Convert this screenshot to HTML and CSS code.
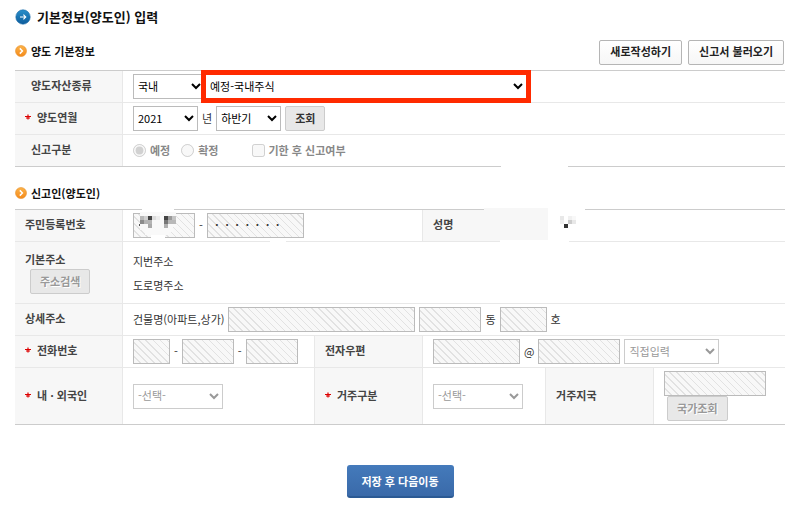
FILE: index.html
```
<!DOCTYPE html>
<html lang="ko">
<head>
    <meta charset="UTF-8">
    <meta name="viewport" content="width=device-width, initial-scale=1.0">
    <title>기본정보(양도인) 입력</title>
    <link rel="stylesheet" href="styles.css">
</head>
<body>
    <!-- shared icons -->
    <svg class="defs" aria-hidden="true">
        <defs>
            <linearGradient id="blue" x1="0" y1="0" x2="0" y2="1">
                <stop offset="0" stop-color="#2a8fca"/>
                <stop offset="1" stop-color="#0d5c9c"/>
            </linearGradient>
            <linearGradient id="orange" x1="0" y1="0" x2="0" y2="1">
                <stop offset="0" stop-color="#fbb34a"/>
                <stop offset="1" stop-color="#f58a1a"/>
            </linearGradient>
        </defs>
        <symbol id="chevron" viewBox="0 0 12 12">
            <circle cx="6" cy="6" r="5.5" fill="url(#orange)" stroke="#e8912d" stroke-width="0.6"/>
            <path d="M4.8 3.4L7.4 6L4.8 8.6" fill="none" stroke="#fff" stroke-width="1.5"/>
        </symbol>
        <symbol id="star" viewBox="0 0 6 6">
            <path d="M3 0.5V5.5M0 2.5H6M1 4H5" stroke="#d00" stroke-width="1.2" fill="none"/>
        </symbol>
    </svg>

    <h1>
        <svg class="icon-title" viewBox="0 0 16 16">
            <circle cx="8" cy="8" r="7.2" fill="url(#blue)" stroke="#1a6aa8" stroke-width="0.6"/>
            <path d="M5 8H10.8M8.4 5.6L10.8 8L8.4 10.4" fill="none" stroke="#fff" stroke-width="1.1"/>
        </svg>
        기본정보(양도인) 입력
    </h1>

    <section>
        <div class="section-head">
            <h2><svg class="icon-sub"><use href="#chevron"/></svg>양도 기본정보</h2>
            <div class="actions">
                <button type="button" class="btn-white">새로작성하기</button>
                <button type="button" class="btn-white">신고서 불러오기</button>
            </div>
        </div>
        <table class="basic">
            <colgroup><col class="col-first"><col></colgroup>
            <tbody>
                <tr>
                    <th scope="row">양도자산종류</th>
                    <td>
                        <div class="line flush">
                            <select class="w-area" aria-label="국내외 구분"><option>국내</option></select>
                            <div class="highlight">
                                <select aria-label="양도자산종류"><option>예정-국내주식</option></select>
                            </div>
                        </div>
                    </td>
                </tr>
                <tr>
                    <th scope="row" class="required"><svg class="star"><use href="#star"/></svg>양도연월</th>
                    <td>
                        <div class="line">
                            <select class="w-65" id="year"><option>2021</option></select>
                            <label for="year">년</label>
                            <select class="w-65" aria-label="반기"><option>하반기</option></select>
                            <button type="button" class="btn-gray">조회</button>
                        </div>
                    </td>
                </tr>
                <tr>
                    <th scope="row">신고구분</th>
                    <td>
                        <div class="line choices">
                            <input type="radio" name="kind" id="kind-pre" checked disabled><label for="kind-pre">예정</label>
                            <input type="radio" name="kind" id="kind-final" disabled><label for="kind-final">확정</label>
                            <input type="checkbox" id="late" disabled><label for="late">기한 후 신고여부</label>
                        </div>
                    </td>
                </tr>
            </tbody>
        </table>
        <span class="patch patch-basic"></span>
    </section>

    <section class="reporter">
        <div class="section-head">
            <h2><svg class="icon-sub"><use href="#chevron"/></svg>신고인(양도인)</h2>
        </div>
        <div class="table-wrap">
            <table>
                <colgroup>
                    <col class="col-first"><col class="col-phone"><col class="col-label">
                    <col class="col-kind"><col class="col-label"><col>
                </colgroup>
                <tbody>
                    <tr>
                        <th scope="row">주민등록번호</th>
                        <td colspan="2">
                            <div class="line">
                                <input type="text" class="w-62" aria-label="주민등록번호 앞자리" readonly>
                                <span>-</span>
                                <input type="text" class="w-97 secret" aria-label="주민등록번호 뒷자리" value="ㆍㆍㆍㆍㆍㆍㆍ" readonly>
                            </div>
                        </td>
                        <th scope="row">성명</th>
                        <td colspan="2"></td>
                    </tr>
                    <tr class="address">
                        <th scope="row">기본주소<br><button type="button" class="btn-gray" disabled>주소검색</button></th>
                        <td colspan="5">
                            <p>지번주소</p>
                            <p>도로명주소</p>
                        </td>
                    </tr>
                    <tr>
                        <th scope="row">상세주소</th>
                        <td colspan="5">
                            <div class="line">
                                <label for="building">건물명(아파트,상가)</label>
                                <input type="text" class="w-187" id="building" readonly>
                                <input type="text" class="w-62" id="dong" readonly>
                                <label for="dong">동</label>
                                <input type="text" class="w-47" id="ho" readonly>
                                <label for="ho">호</label>
                            </div>
                        </td>
                    </tr>
                    <tr>
                        <th scope="row" class="required"><svg class="star"><use href="#star"/></svg>전화번호</th>
                        <td>
                            <div class="line">
                                <input type="text" class="w-37" aria-label="전화번호 1" readonly>
                                <span>-</span>
                                <input type="text" class="w-52" aria-label="전화번호 2" readonly>
                                <span>-</span>
                                <input type="text" class="w-52" aria-label="전화번호 3" readonly>
                            </div>
                        </td>
                        <th scope="row">전자우편</th>
                        <td colspan="3">
                            <div class="line">
                                <input type="text" class="w-87" aria-label="전자우편 아이디" readonly>
                                <span>@</span>
                                <input type="text" class="w-82" aria-label="전자우편 도메인" readonly>
                                <select class="w-95" aria-label="도메인 선택" disabled><option>직접입력</option></select>
                            </div>
                        </td>
                    </tr>
                    <tr class="nation">
                        <th scope="row" class="required"><svg class="star"><use href="#star"/></svg>내 · 외국인</th>
                        <td><select class="w-90" aria-label="내 · 외국인" disabled><option>-선택-</option></select></td>
                        <th scope="row" class="required"><svg class="star"><use href="#star"/></svg>거주구분</th>
                        <td><select class="w-90" aria-label="거주구분" disabled><option>-선택-</option></select></td>
                        <th scope="row">거주지국</th>
                        <td>
                            <input type="text" class="w-102" aria-label="거주지국" readonly>
                            <button type="button" class="btn-gray" disabled>국가조회</button>
                        </td>
                    </tr>
                </tbody>
            </table>
            <!-- masked personal data -->
            <svg class="mask mask-id" viewBox="0 0 46 31" shape-rendering="crispEdges">
                <path d="M9 0H41V5H9ZM18 27H32V31H18Z" fill="#fff"/>
                <path d="M7 4H43V19H40V24H36V27H12V22H7Z" fill="#f9f9f9"/>
                <path d="M7 8H11V12H7Z" fill="#b8b8b8"/>
                <path d="M11 8H15V12H11Z" fill="#d0d0d0"/>
                <path d="M15 8H19V12H15Z" fill="#444"/>
                <path d="M19 8H23V12H19Z" fill="#dcdcdc"/>
                <path d="M23 8H27V12H23Z" fill="#ececec"/>
                <path d="M7 12H11V16H7Z" fill="#8c8c8c"/>
                <path d="M11 12H15V16H11ZM15 12H19V16H15Z" fill="#b4b4b4"/>
                <path d="M15 16H19V20H15Z" fill="#aaa"/>
                <path d="M31 8H35V12H31Z" fill="#444"/>
                <path d="M35 8H39V12H35Z" fill="#9a9a9a"/>
                <path d="M39 8H43V12H39Z" fill="#c4c4c4"/>
                <path d="M31 12H35V16H31Z" fill="#777"/>
                <path d="M35 12H43V16H35Z" fill="#b8b8b8"/>
                <path d="M31 16H35V20H31Z" fill="#b0b0b0"/>
                <path d="M6 16H7V18H6Z" fill="#555"/>
            </svg>
            <span class="patch patch-line"></span>
            <span class="patch patch-name-line"></span>
            <span class="patch patch-name"></span>
            <svg class="mask mask-name" viewBox="0 0 37 33" shape-rendering="crispEdges">
                <path d="M0 0H37V32H0Z" fill="#fff"/>
                <path d="M12 8H16V12H12ZM24 12H28V16H24Z" fill="#e8e8e8"/>
                <path d="M20 8H24V12H20ZM12 12H16V16H12Z" fill="#f0f0f0"/>
                <path d="M24 8H28V12H24Z" fill="#f8f8f8"/>
                <path d="M20 12H24V16H20Z" fill="#ccc"/>
                <path d="M16 16H20V20H16Z" fill="#333"/>
            </svg>
        </div>
    </section>

    <div class="submit">
        <button type="button" class="btn-save">저장 후 다음이동</button>
    </div>
</body>
</html>
```
FILE: styles.css
```
* {
    box-sizing: border-box;
}
body {
    margin: 0;
    padding: 8px 13px 14px 15px;
    background: #fff;
    color: #333;
    font-family: "Noto Sans CJK KR", "Liberation Sans", sans-serif;
    font-size: 11px;
    line-height: 16px;
}
.defs {
    position: absolute;
    width: 0;
    height: 0;
}
h1, h2 {
    display: flex;
    align-items: center;
    margin: 0;
    color: #111;
    font-weight: 700;
}
h1 {
    gap: 6px;
    font-size: 13px;
    line-height: 18px;
}
h2 {
    gap: 4px;
    font-size: 11px;
}
.icon-title {
    width: 16px;
    height: 16px;
}
.icon-sub {
    width: 12px;
    height: 12px;
}
section {
    position: relative;
}
.section-head {
    display: flex;
    justify-content: space-between;
    align-items: center;
    height: 44px;
    padding-top: 8px;
}
.section-head h2 {
    padding-bottom: 2px;
}
.actions {
    display: flex;
    gap: 6px;
    padding-right: 1px;
}
.reporter .section-head {
    height: 42px;
    padding-top: 12px;
}
table {
    width: 100%;
    table-layout: fixed;
    border-spacing: 0;
    border-top: 1px solid #ccc;
    border-bottom: 1px solid #ccc;
}
.col-first {
    width: 107px;
}
.col-label {
    width: 108px;
}
.col-phone {
    width: 192px;
}
.col-kind {
    width: 123px;
}
th, td {
    height: 32px;
    padding: 3px 0 3px 10px;
    border-bottom: 1px solid #e8e8e8;
    border-left: 1px solid #e8e8e8;
    text-align: left;
}
tr:last-child th, tr:last-child td {
    height: 31px;
    border-bottom: 0;
}
th:first-child {
    border-left: 0;
}
th {
    padding-bottom: 6px;
    background: #f7f7f7;
    color: #444;
    font-weight: 700;
}
.basic th {
    padding-left: 16px;
}
.basic th.required {
    padding-left: 10px;
}
.star {
    width: 6px;
    height: 6px;
    margin-right: 6px;
    vertical-align: 2px;
}
.line {
    display: flex;
    align-items: center;
    gap: 4px;
}
.line label, .line span {
    padding-bottom: 2px;
}
.flush {
    gap: 0;
}
input, select, button {
    height: 25px;
    margin: 0;
    font: inherit;
}
input[type="text"] {
    display: block;
    padding: 0 4px;
    border: 1px solid #bbb;
    background: repeating-linear-gradient(45deg, #f8f8f8 0 4px, #e2e2e2 4px 5px);
    color: #333;
}
input.secret {
    padding-bottom: 3px;
    font-weight: 700;
}
select {
    padding: 0 0 2px;
    border: 1px solid #bbb;
    border-radius: 0;
    background: #fff;
    color: #000;
}
select:disabled {
    display: block;
    border-color: #ccc;
    color: #999;
    opacity: 1;
}
.highlight {
    position: relative;
    width: 322px;
}
.highlight select {
    width: 100%;
}
.highlight::after {
    content: "";
    position: absolute;
    inset: -4px;
    border: 5px solid #ff2a00;
    pointer-events: none;
}
.w-area { width: 72px; }
.w-37 { width: 37px; }
.w-47 { width: 47px; }
.w-52 { width: 52px; }
.w-62 { width: 62px; }
.w-65 { width: 65px; }
.w-82 { width: 82px; }
.w-87 { width: 87px; }
.w-90 { width: 90px; }
.w-95 { width: 95px; }
.w-97 { width: 97px; }
.w-102 { width: 102px; }
.w-187 { width: 187px; }
.choices {
    color: #888;
    font-weight: 700;
}
.choices input {
    width: 13px;
    height: 13px;
}
.choices label {
    margin-right: 7px;
}
#late {
    margin-left: 22px;
}
button {
    border-radius: 2px;
    white-space: nowrap;
}
.btn-white {
    padding: 0 10px 2px;
    border: 1px solid #b5b5b5;
    background: linear-gradient(#fff, #f6f6f6);
    color: #222;
    font-weight: 700;
}
.btn-gray {
    padding: 0 9px 2px;
    border: 1px solid #ccc;
    background: #e8e8e8;
    color: #333;
    font-weight: 700;
}
.btn-gray:disabled {
    color: #999;
    text-shadow: 1px 1px #fff;
}
.address th, .address td {
    height: 62px;
}
.address th {
    padding-bottom: 3px;
}
.address .btn-gray {
    margin: 2px 0 0 5px;
}
.address p {
    margin: 0;
    line-height: 24px;
}
.nation .btn-gray {
    display: block;
    margin-left: 3px;
}
.submit {
    padding-top: 40px;
    text-align: center;
}
.btn-save {
    height: 33px;
    padding: 0 15px;
    border: 0;
    border-bottom: 2px solid #2b5a94;
    border-radius: 3px;
    background: linear-gradient(#447abb, #3a6aa9);
    color: #fff;
    font-weight: 700;
}
.table-wrap {
    position: relative;
}
.patch, .mask {
    position: absolute;
}
.patch {
    background: #fff;
}
.patch-basic {
    left: 486px;
    bottom: -1px;
    width: 67px;
    height: 4px;
}
.mask-id {
    left: 118px;
    top: -1px;
    width: 46px;
    height: 31px;
}
.patch-line {
    left: 255px;
    top: 31px;
    width: 16px;
    height: 3px;
}
.patch-name-line {
    left: 485px;
    top: 31px;
    width: 69px;
    height: 3px;
}
.patch-name {
    left: 469px;
    top: -1px;
    width: 64px;
    height: 32px;
    background: #f7f7f7;
}
.mask-name {
    left: 533px;
    top: -1px;
    width: 37px;
    height: 33px;
}
```
